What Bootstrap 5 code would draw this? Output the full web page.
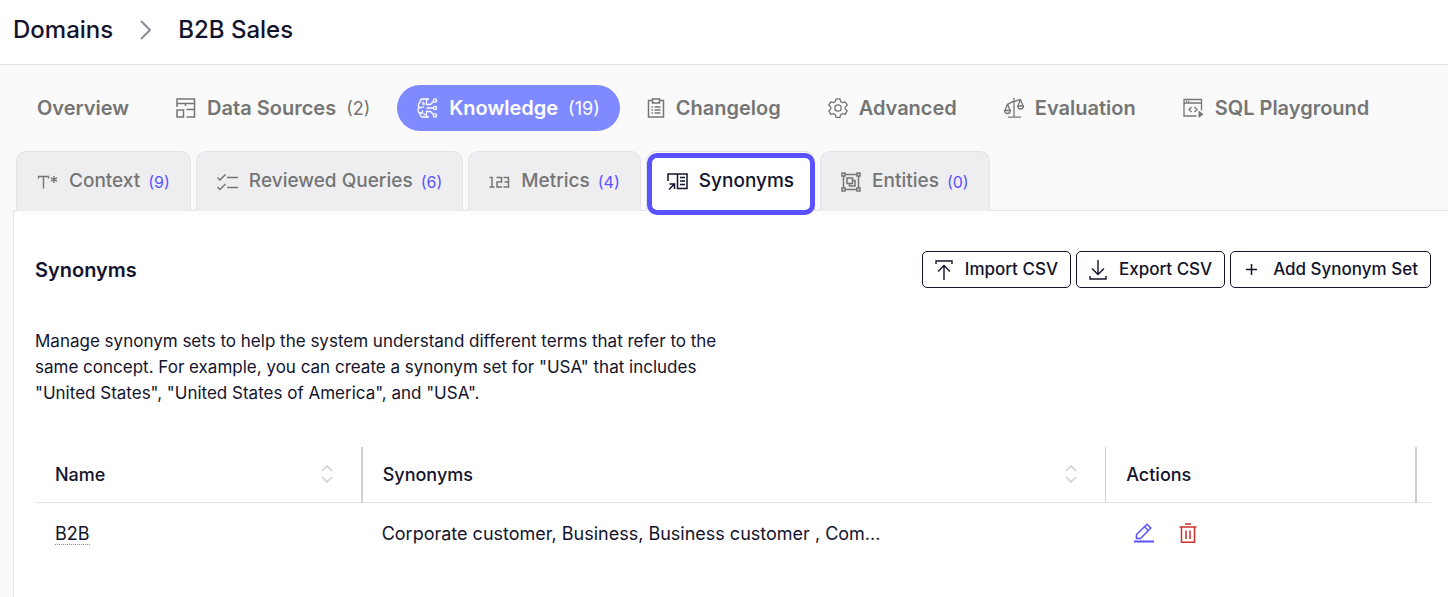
<!DOCTYPE html>
<html lang="en">
<head>
<meta charset="utf-8">
<meta name="viewport" content="width=device-width, initial-scale=1">
<title>B2B Sales – Synonyms</title>
<link href="https://cdn.jsdelivr.net/npm/bootstrap@5.3.0/dist/css/bootstrap.min.css" rel="stylesheet">
<style>
  :root { --ink: #13132d; --muted: #757575; --line: #e3e3e5; --accent: #5b52ff; --soft: #eeeef1; }
  body { font-family: Inter, "Liberation Sans", sans-serif; font-size: 18px; color: var(--ink); background: #fafafa; min-height: 100vh; }
  a { text-decoration: none; color: inherit; }
  svg { display: block; flex: none; fill: none; stroke: currentColor; }
  .page-head { background: #fff; border-bottom: 1px solid var(--line); height: 65px; padding: 0 13px 5px; font-size: 24px; font-weight: 500; gap: 27px; }
  .page-head svg { color: #8c8c98; }
  .main-nav { padding: 20px 17px; gap: 7px; font-size: 20px; font-weight: 600; }
  .main-nav .nav-link { color: var(--muted); padding: 0 20px; height: 46px; gap: 10px; border-radius: 23px; white-space: nowrap; }
  .main-nav svg { margin-right: 1px; }
  .main-nav .nav-link.active { background: #7f8aff; color: #fff; }
  .count { font-weight: 400; font-size: 18px; }
  .sub-nav { padding: 0 16px; gap: 5px; font-size: 19px; font-weight: 500; border: 0; }
  .sub-nav .nav-link { position: relative; color: var(--muted); background: var(--soft); border: 1px solid var(--line); border-bottom: 0; border-radius: 10px 10px 0 0; height: 60px; padding: 0 20px; gap: 8px; white-space: nowrap; }
  .sub-nav svg { margin-right: 3px; }
  .sub-nav .count { color: var(--accent); font-size: 16px; }
  .sub-nav .nav-link.active { background: #fff; color: var(--ink); }
  .sub-nav .nav-link.active::after { content: ""; position: absolute; inset: 1px -1px -4px 0; border: 5px solid var(--accent); border-radius: 10px; }
  .panel { background: #fff; border: solid var(--line); border-width: 1px 0 0 1px; margin-left: 13px; padding: 40px 17px 0 21px; }
  .panel h2 { font-size: 20px; font-weight: 600; line-height: 38px; }
  .tools { gap: 5px; }
  .tool-btn { --bs-btn-color: var(--ink); --bs-btn-border-color: var(--ink); --bs-btn-hover-bg: var(--soft); --bs-btn-hover-color: var(--ink); --bs-btn-hover-border-color: var(--ink); font-size: 17px; font-weight: 500; height: 37px; padding: 0 12px 0 11px; gap: 11px; border-radius: 5px; }
  .intro { max-width: 720px; font-size: 17px; line-height: 26px; margin: 39px 0 41px; }
  .syn-table { table-layout: fixed; width: 100%; font-size: 18px; }
  .syn-table th { font-weight: 500; height: 55px; padding: 0 20px; border-right: 2px solid #cfcfd6; }
  .syn-table th:nth-child(2) { border-right-width: 1px; }
  .syn-table th:last-child { border-right: 0; padding: 0; }
  .syn-table thead tr { border-bottom: 1px solid var(--line); }
  .syn-table td { height: 62px; padding: 0 20px; }
  .c-name { width: 23.4%; } .c-syn { width: 53.3%; } .c-act { width: 22.2%; }
  .sorter { color: #cfcfd4; padding: 0 8px; border: 0; background: none; }
  .term { border-bottom: 1px dotted #8c8c98; line-height: 20px; display: inline-block; }
  .acts { gap: 25px; }
  .act { border: 0; background: none; padding: 0; }
  .act-edit { color: var(--accent); }
  .act-delete { color: #d0312d; }
</style>
</head>
<body class="d-flex flex-column">
<header class="page-head d-flex align-items-center">
  <a href="#">Domains</a>
  <svg width="11" height="20" viewBox="0 0 11 20" stroke-width="2"><path d="M1 1l9 9-9 9"/></svg>
  <span>B2B Sales</span>
</header>

<nav class="main-nav nav flex-nowrap" aria-label="Domain sections">
  <a class="nav-link d-flex align-items-center" href="#">Overview</a>
  <a class="nav-link d-flex align-items-center" href="#">
    <svg width="20" height="20" viewBox="0 0 20 20" stroke-width="1.5"><path d="M1 9V1h17.500v18H10.500M1 5.500h17.500M9.500 5.500V8M18.500 11.500h-8M1 12h6.500v7H1z"/></svg>
    Data Sources <span class="count">(2)</span></a>
  <a class="nav-link active d-flex align-items-center" aria-current="page" href="#">
    <svg width="21" height="20" viewBox="0 0 21 20" stroke-width="1.300"><path d="M12 1H5.500C3.500 1 3 3 3 4.500 1 5 1 8 2 9.500 0.500 11 1 14.500 3 15.500 3 17.500 4 19 6 19h6M9.500 1.500v5h4l3-3M9.500 18.500v-5h4l3 3M9.500 10h6.500M2 9.500h3M6 3.500v2.500h2M5.500 9.500l1.500-1.500M3 15h2.500v-2.500M6.500 16.500h2"/><circle cx="18" cy="2.500" r="1.600"/><circle cx="18" cy="10" r="1.600"/><circle cx="18" cy="17.500" r="1.600"/></svg>
    Knowledge <span class="count">(19)</span></a>
  <a class="nav-link d-flex align-items-center" href="#">
    <svg width="18" height="20" viewBox="0 0 18 20" stroke-width="1.500"><path d="M5.500 2.500h-4V19h15V2.500h-4M5.500 1h7v4h-7zM7.500 9h6M7.500 12h6M7.500 15h6M4.500 9H6M4.500 12H6M4.500 15H6"/></svg>
    Changelog</a>
  <a class="nav-link d-flex align-items-center" href="#">
    <svg width="20" height="20" viewBox="0 0 20 20" stroke-width="1.300"><path d="M8 .8h4l.6 2.700 1.900 1.100 2.700-.8 2 3.400-2 1.900v2l2 1.800-2 3.500-2.700-.8-1.900 1.100-.6 2.600H8l-.6-2.600-1.900-1.100-2.700.8-2-3.500 2-1.800v-2l-2-1.900 2-3.400 2.700.8 1.900-1.100z" stroke-linejoin="round"/><circle cx="10" cy="10" r="3.200"/></svg>
    Advanced</a>
  <a class="nav-link d-flex align-items-center" href="#">
    <svg width="20" height="20" viewBox="0 0 20 20" stroke-width="1.300"><path d="M10 0v19M4 19.200h13M3.500 6C6 6 7 3.500 10 3.500S14 1.500 16.500 1.500M3.500 6L1 12.500M3.500 6L6 12.500M16.500 1.500L14 8M16.500 1.500L19 8M.6 12.500h5.800c0 4-5.800 4-5.800 0zM13.600 8h5.800c0 4-5.800 4-5.800 0z"/></svg>
    Evaluation</a>
  <a class="nav-link d-flex align-items-center" href="#">
    <svg width="21" height="20" viewBox="0 0 21 20" stroke-width="1.300"><path d="M13.500 18H1V1.500h17.500v11M1 5h17.500M3 3.300h1.200M5.200 3.300h1.200M8.500 9L6 11.500 8.500 14M11.500 9l2.500 2.500-2.500 2.500"/><path d="M15.500 12.500l5 3.700-5 3.800z" fill="currentColor" stroke="none"/></svg>
    SQL Playground</a>
</nav>

<nav class="sub-nav nav nav-tabs flex-nowrap" aria-label="Knowledge sections">
  <a class="nav-link d-flex align-items-center" href="#">
    <svg width="21" height="14" viewBox="0 0 21 14" stroke-width="1.400"><path d="M1.500 3.500V1.500h10v2M6.500 1.500V13.500M17 1v7M13.900 2.900l6.200 3.200M13.900 6.100l6.200-3.200"/></svg>
    Context <span class="count">(9)</span></a>
  <a class="nav-link d-flex align-items-center" href="#">
    <svg width="21" height="18" viewBox="0 0 21 18" stroke-width="1.500"><path d="M.5 4.500l2.500 2.500 5.500-5.500M.5 14l2.500 2.500L8.500 11M10 4.500h11M10 14.500h11"/></svg>
    Reviewed Queries <span class="count">(6)</span></a>
  <a class="nav-link d-flex align-items-center" href="#">
    <svg width="21" height="12" viewBox="0 0 21 12" stroke-width="1.500"><path d="M.5 1.500H3v9.500M.5 11h5M7.500 1.500h5V6h-4.500v5h5M14.500 1.500h5V11h-5M15.500 6h4"/></svg>
    Metrics <span class="count">(4)</span></a>
  <a class="nav-link active d-flex align-items-center" aria-current="page" href="#">
    <svg width="21" height="19" viewBox="0 0 21 19" stroke-width="1.500"><path d="M1 9V2h19v14.500h-9.500V2M13 5.500h5M13 9h5M13 12.500h5M2 17.500l5-5M2.500 12H7.500v5"/></svg>
    Synonyms</a>
  <a class="nav-link d-flex align-items-center" href="#">
    <svg width="20" height="20" viewBox="0 0 20 20" stroke-width="1.500"><path d="M1 1h3v3H1zM16 1h3v3h-3zM1 16h3v3H1zM16 16h3v3h-3zM4 2.500h12M4 17.500h12M2.500 4v12M17.500 4v12M6 6h5.500v5.500H6zM11.500 8.500H14V14H8.500v-2.500"/></svg>
    Entities <span class="count">(0)</span></a>
</nav>

<main class="panel flex-grow-1">
  <div class="d-flex justify-content-between align-items-start">
    <h2 class="m-0">Synonyms</h2>
    <div class="tools d-flex">
      <button type="button" class="btn tool-btn d-flex align-items-center">
        <svg width="20" height="20" viewBox="0 0 20 20" stroke-width="1.400"><path d="M2 4V1h16v3M10 5v15M4 11.500l6-6 6 6"/></svg>Import CSV</button>
      <button type="button" class="btn tool-btn d-flex align-items-center">
        <svg width="20" height="20" viewBox="0 0 20 20" stroke-width="1.400"><path d="M2 16v3h16v-3M10 0v15M4 8.500l6 6 6-6"/></svg>Export CSV</button>
      <button type="button" class="btn tool-btn d-flex align-items-center">
        <svg width="20" height="20" viewBox="0 0 20 20" stroke-width="1.500"><path d="M4 9.500h11M9.500 4v11"/></svg>Add Synonym Set</button>
    </div>
  </div>
  <p class="intro">Manage synonym sets to help the system understand different terms that refer to the same concept. For example, you can create a synonym set for "USA" that includes "United States", "United States of America", and "USA".</p>
  <table class="syn-table">
    <colgroup><col class="c-name"><col class="c-syn"><col class="c-act"><col></colgroup>
    <thead>
      <tr>
        <th scope="col"><div class="d-flex justify-content-between align-items-center">Name
          <button type="button" class="sorter" aria-label="Sort by name"><svg width="12" height="18" viewBox="0 0 12 18" stroke-width="1.500"><path d="M1 6l5-5 5 5M1 12l5 5 5-5"/></svg></button></div></th>
        <th scope="col"><div class="d-flex justify-content-between align-items-center">Synonyms
          <button type="button" class="sorter" aria-label="Sort by synonyms"><svg width="12" height="18" viewBox="0 0 12 18" stroke-width="1.500"><path d="M1 6l5-5 5 5M1 12l5 5 5-5"/></svg></button></div></th>
        <th scope="col">Actions</th>
        <th></th>
      </tr>
    </thead>
    <tbody>
      <tr>
        <td><span class="term">B2B</span></td>
        <td>Corporate customer, Business, Business customer , Com...</td>
        <td><div class="acts d-flex align-items-center ps-2">
          <button type="button" class="act act-edit" aria-label="Edit"><svg width="20" height="20" viewBox="0 0 20 20" stroke-width="1.500"><path d="M2.500 15.500v-4L13 1.200l3.800 3.800L6.500 15.500zM10.500 3.700l3.800 3.800"/><path d="M0 18.500h20" stroke-width="2"/></svg></button>
          <button type="button" class="act act-delete" aria-label="Delete"><svg width="18" height="20" viewBox="0 0 18 20" stroke-width="1.500"><path d="M.5 4h17M2.500 4v15.200h13V4M6 1h6M7 7.500V16M11 7.500V16"/></svg></button>
        </div></td>
        <td></td>
      </tr>
    </tbody>
  </table>
</main>
<script src="https://cdn.jsdelivr.net/npm/bootstrap@5.3.0/dist/js/bootstrap.bundle.min.js"></script>
</body>
</html>
